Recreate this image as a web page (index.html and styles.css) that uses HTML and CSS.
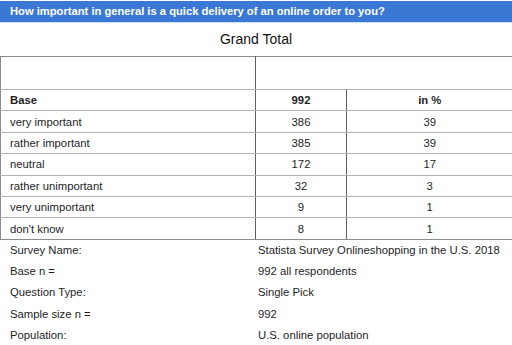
FILE: index.html
```html
<!DOCTYPE html>
<html>
<head>
<meta charset="utf-8">
<link rel="stylesheet" href="styles.css">
</head>
<body>
<div class="title">How important in general is a quick delivery of an online order to you?</div>
<div class="grand">Grand Total</div>
<table class="data">
  <colgroup><col class="c1"><col class="c2"><col class="c3"></colgroup>
  <tr class="empty"><td></td><td colspan="2"></td></tr>
  <tr class="base"><td>Base</td><td class="num">992</td><td class="num">in %</td></tr>
  <tr><td>very important</td><td class="num">386</td><td class="num">39</td></tr>
  <tr><td>rather important</td><td class="num">385</td><td class="num">39</td></tr>
  <tr><td>neutral</td><td class="num">172</td><td class="num">17</td></tr>
  <tr><td>rather unimportant</td><td class="num">32</td><td class="num">3</td></tr>
  <tr><td>very unimportant</td><td class="num">9</td><td class="num">1</td></tr>
  <tr><td>don't know</td><td class="num">8</td><td class="num">1</td></tr>
</table>
<div class="meta">
  <div class="mrow"><span class="ml">Survey Name:</span><span class="mv">Statista Survey Onlineshopping in the U.S. 2018</span></div>
  <div class="mrow"><span class="ml">Base n =</span><span class="mv">992 all respondents</span></div>
  <div class="mrow"><span class="ml">Question Type:</span><span class="mv">Single Pick</span></div>
  <div class="mrow"><span class="ml">Sample size n =</span><span class="mv">992</span></div>
  <div class="mrow"><span class="ml">Population:</span><span class="mv">U.S. online population</span></div>
</div>
</body>
</html>
```
FILE: styles.css
```css
html, body {
  margin: 0;
  padding: 0;
  background: #ffffff;
}
body {
  padding-top: 1px;
  font-family: "Liberation Sans", Arial, sans-serif;
  font-size: 11.3px;
  color: #1e1e1e;
  width: 512px;
  overflow: hidden;
}
.title {
  height: 21px;
  line-height: 21px;
  background: #3b78d6;
  color: #ffffff;
  font-weight: bold;
  font-size: 11.2px;
  padding-left: 10px;
  border-bottom: 1px solid #cfe0f6;
  white-space: nowrap;
}
.grand {
  height: 33px;
  line-height: 33px;
  text-align: center;
  font-size: 14px;
  color: #111;
}
.data {
  border-collapse: collapse;
  width: 512px;
  table-layout: fixed;
  border-top: 1px solid #8c8c8c;
  border-left: 1px solid #8c8c8c;
  border-right: none;
}
.c1 { width: 255px; }
.c2 { width: 91px; }
.c3 { width: 166px; }
.data td {
  height: 20.4px;
  padding: 0 0 0 9px;
  border-bottom: 1px solid #b4b4b4;
  border-right: 1px solid #5e5e5e;
  white-space: nowrap;
  line-height: 20px;
}
.data td:last-child {
  border-right: none;
}
.data tr:last-child td {
  border-bottom: 1px solid #8c8c8c;
}
.data .empty td {
  height: 32px;
}
.data td.num {
  text-align: center;
  padding: 0;
}
.base td {
  font-weight: bold;
}
.meta {
  display: flex;
  flex-direction: column;
}
.mrow {
  display: flex;
  height: 21.3px;
  line-height: 21px;
}
.ml {
  width: 248px;
  padding-left: 10px;
}
.mv {
  flex: 1;
  white-space: nowrap;
}
```
